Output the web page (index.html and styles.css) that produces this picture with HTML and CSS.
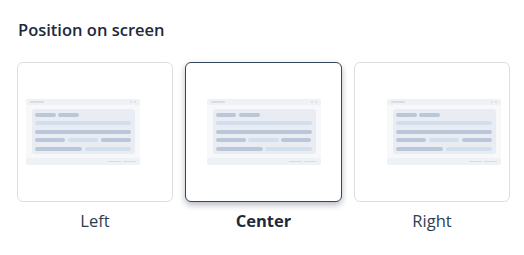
FILE: index.html
```html
<!DOCTYPE html>
<html>
<head>
<meta charset="utf-8">
<link rel="stylesheet" href="styles.css">
</head>
<body>
<div class="panel">
  <h2 class="title">Position on screen</h2>
  <div class="options">
    <div class="option">
      <div class="card card-left">
        <div class="win">
          <div class="win-top"><span class="win-line"></span><span class="win-dots"><i></i><i></i></span></div>
          <div class="win-body">
            <div class="row"><span class="pill dark w21"></span><span class="pill dark w21"></span></div>
            <div class="row"><span class="pill light grow"></span></div>
            <div class="row"><span class="pill dark grow"></span></div>
            <div class="row"><span class="pill dark grow"></span><span class="pill light grow"></span><span class="pill dark grow"></span></div>
            <div class="row"><span class="pill dark w47"></span><span class="pill light grow"></span></div>
          </div>
          <div class="win-foot"><span class="foot-line"></span><span class="foot-line"></span></div>
        </div>
      </div>
      <div class="label">Left</div>
    </div>
    <div class="option">
      <div class="card card-center selected">
        <div class="win">
          <div class="win-top"><span class="win-line"></span><span class="win-dots"><i></i><i></i></span></div>
          <div class="win-body">
            <div class="row"><span class="pill dark w21"></span><span class="pill dark w21"></span></div>
            <div class="row"><span class="pill light grow"></span></div>
            <div class="row"><span class="pill dark grow"></span></div>
            <div class="row"><span class="pill dark grow"></span><span class="pill light grow"></span><span class="pill dark grow"></span></div>
            <div class="row"><span class="pill dark w47"></span><span class="pill light grow"></span></div>
          </div>
          <div class="win-foot"><span class="foot-line"></span><span class="foot-line"></span></div>
        </div>
      </div>
      <div class="label label-selected">Center</div>
    </div>
    <div class="option">
      <div class="card card-right">
        <div class="win">
          <div class="win-top"><span class="win-line"></span><span class="win-dots"><i></i><i></i></span></div>
          <div class="win-body">
            <div class="row"><span class="pill dark w21"></span><span class="pill dark w21"></span></div>
            <div class="row"><span class="pill light grow"></span></div>
            <div class="row"><span class="pill dark grow"></span></div>
            <div class="row"><span class="pill dark grow"></span><span class="pill light grow"></span><span class="pill dark grow"></span></div>
            <div class="row"><span class="pill dark w47"></span><span class="pill light grow"></span></div>
          </div>
          <div class="win-foot"><span class="foot-line"></span><span class="foot-line"></span></div>
        </div>
      </div>
      <div class="label">Right</div>
    </div>
  </div>
</div>
</body>
</html>
```
FILE: styles.css
```css
* { box-sizing: border-box; }
html, body { margin: 0; padding: 0; background: #ffffff; }
body { font-family: "Open Sans", "Noto Sans", sans-serif; }

.panel { padding: 19px 14px 0 17px; }

.title {
  margin: 0 0 21px 1px;
  font-size: 16.5px;
  font-weight: 600;
  line-height: 22px;
  color: #1e2a3b;
}

.options {
  display: grid;
  grid-template-columns: 156px 157px 156px;
  column-gap: 12px;
}

.option { display: flex; flex-direction: column; align-items: center; }

.card {
  width: 100%;
  height: 140px;
  border: 1px solid #dcdfe4;
  border-radius: 6px;
  background: #ffffff;
  display: flex;
  align-items: center;
  padding: 0 8px;
}
.card-left { justify-content: flex-start; }
.card-center { justify-content: center; }
.card-right { justify-content: flex-end; }

.selected {
  border: 1.5px solid #34465c;
  box-shadow: 0 3px 6px rgba(30, 41, 59, 0.32);
}

.win {
  width: 114px;
  height: 66px;
  background: #f7f8fa;
  border-radius: 2px;
  display: flex;
  flex-direction: column;
  overflow: hidden;
}

.win-top {
  height: 6px;
  background: #eff1f5;
  display: flex;
  align-items: center;
  justify-content: space-between;
  padding: 0 4px;
}
.win-line { width: 14px; height: 1.4px; background: #d6dce4; border-radius: 1px; }
.win-dots { display: flex; gap: 2px; }
.win-dots i { width: 2px; height: 2px; border-radius: 50%; background: #d6dce4; }

.win-body {
  margin: 4px 5px 0 6px;
  height: 45px;
  background: #e9edf3;
  border-radius: 3px;
  padding: 4px 4px 0 3px;
  display: flex;
  flex-direction: column;
  gap: 4.8px;
}

.row { display: flex; gap: 2.7px; height: 3.7px; }
.pill { height: 3.7px; border-radius: 2px; }
.dark { background: #b9c7d8; }
.light { background: #d2deec; }
.grow { flex: 1; }
.w21 { width: 20.7px; }
.w47 { width: 47px; }

.win-foot {
  margin-top: 4px;
  height: 7px;
  background: #eef1f5;
  display: flex;
  align-items: center;
  justify-content: flex-end;
  gap: 2px;
  padding: 0 4.3px;
}
.foot-line { width: 12.7px; height: 1.4px; background: #d6dce4; border-radius: 1px; }

.label {
  margin-top: 7.5px;
  font-size: 16.5px;
  line-height: 22px;
  color: #2c3e52;
}
.label-selected { font-weight: 700; color: #1e2a3b; }
```
